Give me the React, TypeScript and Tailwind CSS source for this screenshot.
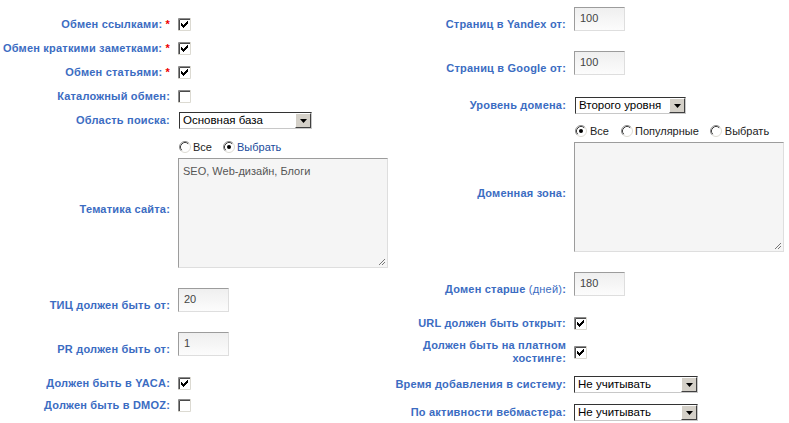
import React from "react";

const LABEL =
  "font-bold text-[11px] leading-[13px] tracking-[0.2px] text-[#3b6cc2] text-right shrink-0";

function Check({ checked }: { checked: boolean }) {
  const cols = [
    [3, 5],
    [4, 6],
    [5, 7],
    [6, 6],
    [7, 5],
    [8, 4],
    [9, 3],
  ];
  return (
    <svg width="13" height="13" viewBox="0 0 13 13" className="block shrink-0">
      <rect x="0" y="0" width="13" height="13" fill="#fff" />
      <path d="M0.5 13V0.5H13" stroke="#8c8c8c" fill="none" />
      <path d="M1.5 12V1.5H12" stroke="#4a4a4a" fill="none" />
      <path d="M0 12.5H12.5V0" stroke="#dcdad2" fill="none" />
      {checked &&
        cols.map(([x, y]) => (
          <rect key={x} x={x} y={y} width="1" height="3" fill="#000" />
        ))}
    </svg>
  );
}

function Radio({ checked }: { checked: boolean }) {
  return (
    <svg width="12" height="12" viewBox="0 0 12 12" className="block shrink-0">
      <circle cx="6" cy="6" r="5.5" fill="#fff" />
      <path d="M2.11 9.89 A5.5 5.5 0 0 1 9.89 2.11" stroke="#8c8c8c" fill="none" />
      <path d="M9.89 2.11 A5.5 5.5 0 0 1 2.11 9.89" stroke="#dcdad2" fill="none" />
      <path d="M2.82 9.18 A4.5 4.5 0 0 1 9.18 2.82" stroke="#404040" fill="none" />
      {checked && <circle cx="6" cy="6" r="2" fill="#000" />}
    </svg>
  );
}

function TextBox({ value }: { value: string }) {
  return (
    <div className="h-[24px] w-[51px] shrink-0 border border-t-[#9c9c9c] border-l-[#9c9c9c] border-r-[#dedede] border-b-[#dedede] bg-linear-to-b from-[#efefef] to-[#fcfcfc] pl-[5px] text-[11px] leading-[21px] text-[#444]">
      {value}
    </div>
  );
}

function Area({ value }: { value?: string }) {
  return (
    <div className="relative h-[110px] w-[210px] shrink-0 border border-t-[#9c9c9c] border-l-[#9c9c9c] border-r-[#dedede] border-b-[#dedede] bg-[#f5f5f5] px-[4px] pt-[5px] text-[11px] leading-[14px] text-[#555]">
      {value}
      <svg
        width="9"
        height="9"
        viewBox="0 0 9 9"
        className="absolute bottom-[1px] right-[1px]"
      >
        <path d="M8 2L2 8M8 5L5 8" stroke="#777" strokeWidth="1" />
      </svg>
    </div>
  );
}

function Select({ value, w }: { value: string; w: string }) {
  return (
    <div
      className={`${w} flex h-[17px] shrink-0 border border-t-[#333] border-l-[#333] border-r-[#c8c8c8] border-b-[#c8c8c8] bg-white`}
    >
      <div className="flex-1 pl-[3px] text-[11.5px] leading-[15px] text-black whitespace-nowrap overflow-hidden">
        {value}
      </div>
      <div className="flex w-[16px] shrink-0 items-center justify-center border border-t-[#fff] border-l-[#fff] border-r-[#404040] border-b-[#404040] bg-[#d4d0c8]">
        <svg width="7" height="4" viewBox="0 0 7 4" className="block">
          <path d="M0 0H7L3.5 4Z" fill="#000" />
        </svg>
      </div>
    </div>
  );
}

function Star() {
  return <span className="text-[#e00]"> *</span>;
}

export default function App() {
  return (
    <div className="flex h-[423px] w-[789px] overflow-hidden bg-white font-['Liberation_Sans',Arial,sans-serif]">
      {/* Left column */}
      <div className="flex w-[395px] shrink-0 flex-col pt-[18px]">
        <div className="flex items-center gap-[8px]">
          <div className={`${LABEL} w-[170px]`}>
            Обмен ссылками:<Star />
          </div>
          <Check checked />
        </div>
        <div className="mt-[11px] flex items-center gap-[8px]">
          <div className={`${LABEL} w-[170px]`}>
            Обмен краткими заметками:<Star />
          </div>
          <Check checked />
        </div>
        <div className="mt-[11px] flex items-center gap-[8px]">
          <div className={`${LABEL} w-[170px]`}>
            Обмен статьями:<Star />
          </div>
          <Check checked />
        </div>
        <div className="mt-[11px] flex items-center gap-[8px]">
          <div className={`${LABEL} w-[170px]`}>Каталожный обмен:</div>
          <Check checked={false} />
        </div>
        <div className="mt-[9px] flex items-center gap-[8px]">
          <div className={`${LABEL} w-[170px]`}>Область поиска:</div>
          <div className="pl-[1px]">
            <Select value="Основная база" w="w-[133px]" />
          </div>
        </div>
        <div className="mt-[12px] flex items-center gap-[8px]">
          <div className="w-[170px] shrink-0" />
          <div className="flex items-center pl-[1px] text-[11px] leading-[12px]">
            <Radio checked={false} />
            <span className="ml-[2px] text-[#222]">Все</span>
            <span className="ml-[11px]">
              <Radio checked />
            </span>
            <span className="ml-[2px] text-[#1a4b9b]">Выбрать</span>
          </div>
        </div>
        <div className="mt-[5px] flex items-center gap-[8px]">
          <div className={`${LABEL} w-[170px] pb-[8px]`}>Тематика сайта:</div>
          <Area value="SEO, Web-дизайн, Блоги" />
        </div>
        <div className="mt-[20px] flex items-end gap-[8px]">
          <div className={`${LABEL} w-[170px]`}>ТИЦ должен быть от:</div>
          <TextBox value="20" />
        </div>
        <div className="mt-[20px] flex items-end gap-[8px]">
          <div className={`${LABEL} w-[170px]`}>PR должен быть от:</div>
          <TextBox value="1" />
        </div>
        <div className="mt-[21px] flex items-center gap-[8px]">
          <div className={`${LABEL} w-[170px]`}>Должен быть в YACA:</div>
          <Check checked />
        </div>
        <div className="mt-[9px] flex items-center gap-[8px]">
          <div className={`${LABEL} w-[170px]`}>Должен быть в DMOZ:</div>
          <Check checked={false} />
        </div>
      </div>

      {/* Right column */}
      <div className="flex w-[394px] shrink-0 flex-col pt-[7px]">
        <div className="flex items-end gap-[8px]">
          <div className={`${LABEL} w-[171px]`}>Страниц в Yandex от:</div>
          <TextBox value="100" />
        </div>
        <div className="mt-[20px] flex items-end gap-[8px]">
          <div className={`${LABEL} w-[171px]`}>Страниц в Google от:</div>
          <TextBox value="100" />
        </div>
        <div className="mt-[22px] flex items-center gap-[8px]">
          <div className={`${LABEL} w-[171px]`}>Уровень домена:</div>
          <div className="pl-[1px]">
            <Select value="Второго уровня" w="w-[111px]" />
          </div>
        </div>
        <div className="mt-[11px] flex items-center gap-[8px]">
          <div className="w-[171px] shrink-0" />
          <div className="flex items-center pl-[1px] text-[11px] leading-[12px] text-[#222]">
            <Radio checked />
            <span className="ml-[3px]">Все</span>
            <span className="ml-[12px]">
              <Radio checked={false} />
            </span>
            <span className="ml-[2px]">Популярные</span>
            <span className="ml-[11px]">
              <Radio checked={false} />
            </span>
            <span className="ml-[3px]">Выбрать</span>
          </div>
        </div>
        <div className="mt-[5px] flex items-center gap-[8px]">
          <div className={`${LABEL} w-[171px] pb-[8px]`}>Доменная зона:</div>
          <Area />
        </div>
        <div className="mt-[20px] flex items-end gap-[8px]">
          <div className={`${LABEL} w-[171px]`}>
            Домен старше <span className="font-normal">(дней)</span>:
          </div>
          <TextBox value="180" />
        </div>
        <div className="mt-[21px] flex items-center gap-[8px]">
          <div className={`${LABEL} w-[171px]`}>URL должен быть открыт:</div>
          <Check checked />
        </div>
        <div className="mt-[9px] flex items-center gap-[8px]">
          <div className={`${LABEL} w-[171px]`}>
            Должен быть на платном
            <br />
            хостинге:
          </div>
          <Check checked />
        </div>
        <div className="mt-[11px] flex items-center gap-[8px]">
          <div className={`${LABEL} w-[171px]`}>Время добавления в систему:</div>
          <Select value="Не учитывать" w="w-[124px]" />
        </div>
        <div className="mt-[11px] flex items-center gap-[8px]">
          <div className={`${LABEL} w-[171px]`}>По активности вебмастера:</div>
          <Select value="Не учитывать" w="w-[124px]" />
        </div>
      </div>
    </div>
  );
}
